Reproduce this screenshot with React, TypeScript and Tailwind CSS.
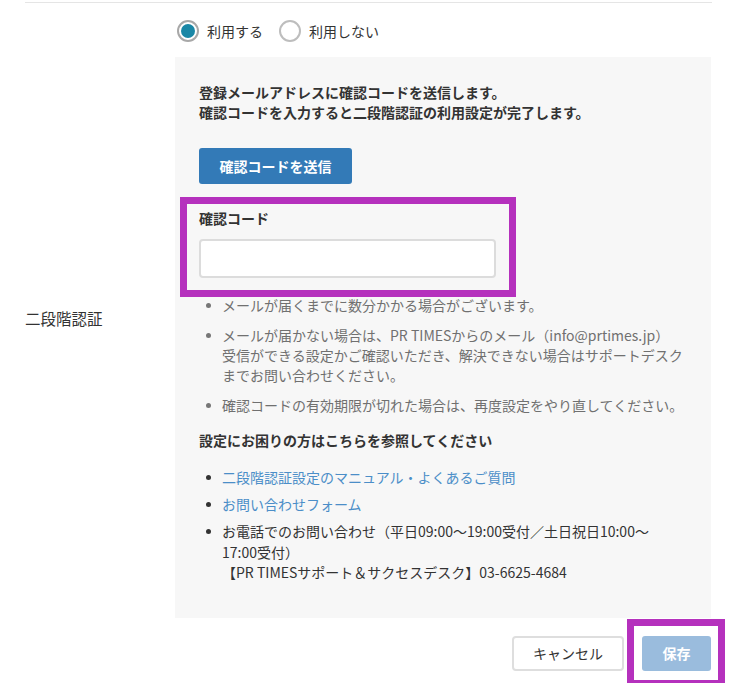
import React from 'react'

const font = { fontFamily: '"Noto Sans CJK JP", "Noto Sans", sans-serif' }

function Radio({ checked, label }: { checked?: boolean; label: string }) {
  return (
    <label className="flex items-center gap-[8px]">
      <span
        className={`flex h-[22px] w-[22px] items-center justify-center rounded-full border-2 bg-white ${
          checked ? 'border-[#a8a8a8]' : 'border-[#bdbdbd]'
        }`}
      >
        {checked && <span className="h-[14px] w-[14px] rounded-full bg-[#1a87a6]" />}
      </span>
      <span className="text-[#333]">{label}</span>
    </label>
  )
}

function Bullet({ color }: { color: string }) {
  return (
    <span className="flex h-[20px] w-[23px] shrink-0 items-center">
      <span className={`ml-[7px] h-[5px] w-[5px] rounded-full ${color}`} />
    </span>
  )
}

export default function App() {
  return (
    <div
      className="relative h-[683px] w-[755px] overflow-hidden bg-white text-[14px] leading-[20px] text-[#333]"
      style={font}
    >
      <div className="ml-[25px] mt-[2px] w-[687px] border-t border-[#e5e5e5]" />

      <div className="flex">
        {/* label column */}
        <div className="flex w-[175px] shrink-0 items-center pl-[25px] pt-[16px] text-[15.5px]">
          二段階認証
        </div>

        <div className="w-[536px]">
          <div className="flex h-[54px] items-center gap-[16px] pl-[2px] pt-[2px]">
            <Radio checked label="利用する" />
            <Radio label="利用しない" />
          </div>

          <div className="bg-[#f7f7f7] pb-[35px] pl-[24px] pr-[16px] pt-[25px]">
            <p className="font-bold">
              登録メールアドレスに確認コードを送信します。
              <br />
              確認コードを入力すると二段階認証の利用設定が完了します。
            </p>

            <button className="mt-[26px] flex h-[36px] w-[153px] items-center justify-center rounded-[3px] bg-[#337ab7] font-bold text-white">
              確認コードを送信
            </button>

            {/* code field */}
            <div className="relative mt-[24px] w-[297px]">
              <div className="font-bold">確認コード</div>
              <input
                className="mt-[11px] block h-[39px] w-full rounded-[4px] border-2 border-[#dcdcdc] bg-white outline-none"
                type="text"
              />
              <div className="pointer-events-none absolute -bottom-[19px] -left-[19px] -right-[20px] -top-[11px] border-[7px] border-[#b531bd]" />
            </div>

            <ul className="mt-[17px] text-[#707070]">
              <li className="flex">
                <Bullet color="bg-[#777]" />
                <span>メールが届くまでに数分かかる場合がございます。</span>
              </li>
              <li className="mt-[10px] flex">
                <Bullet color="bg-[#777]" />
                <span className="whitespace-nowrap">
                  メールが届かない場合は、PR TIMESからのメール（info@prtimes.jp）
                  <br />
                  受信ができる設定かご確認いただき、解決できない場合はサポートデスク
                  <br />
                  までお問い合わせください。
                </span>
              </li>
              <li className="mt-[10px] flex">
                <Bullet color="bg-[#777]" />
                <span className="whitespace-nowrap">確認コードの有効期限が切れた場合は、再度設定をやり直してください。</span>
              </li>
            </ul>

            <p className="mt-[15px] font-bold">設定にお困りの方はこちらを参照してください</p>

            <ul className="mt-[17px] leading-[20.5px]">
              <li className="flex">
                <Bullet color="bg-[#333]" />
                <a className="text-[#4b8ec8]">二段階認証設定のマニュアル・よくあるご質問</a>
              </li>
              <li className="mt-[6.5px] flex">
                <Bullet color="bg-[#333]" />
                <a className="text-[#4b8ec8]">お問い合わせフォーム</a>
              </li>
              <li className="mt-[6.5px] flex">
                <Bullet color="bg-[#333]" />
                <span className="whitespace-nowrap">
                  お電話でのお問い合わせ（平日09:00〜19:00受付／土日祝日10:00〜
                  <br />
                  17:00受付）
                  <br />
                  【PR TIMESサポート＆サクセスデスク】03-6625-4684
                </span>
              </li>
            </ul>
          </div>
        </div>
      </div>

      {/* actions */}
      <div className="mt-[18px] flex justify-end gap-[18px] pr-[44px]">
        <button className="flex h-[35px] w-[112px] items-center justify-center rounded-[4px] border-2 border-[#dedede] bg-white text-[#333]">
          キャンセル
        </button>
        <div className="relative">
          <button className="flex h-[35px] w-[69px] items-center justify-center rounded-[3px] bg-[#9abcdd] font-bold text-white">
            保存
          </button>
          <div className="pointer-events-none absolute -bottom-[16px] -left-[15px] -right-[14px] -top-[17px] border-[7px] border-[#b531bd]" />
        </div>
      </div>
    </div>
  )
}
